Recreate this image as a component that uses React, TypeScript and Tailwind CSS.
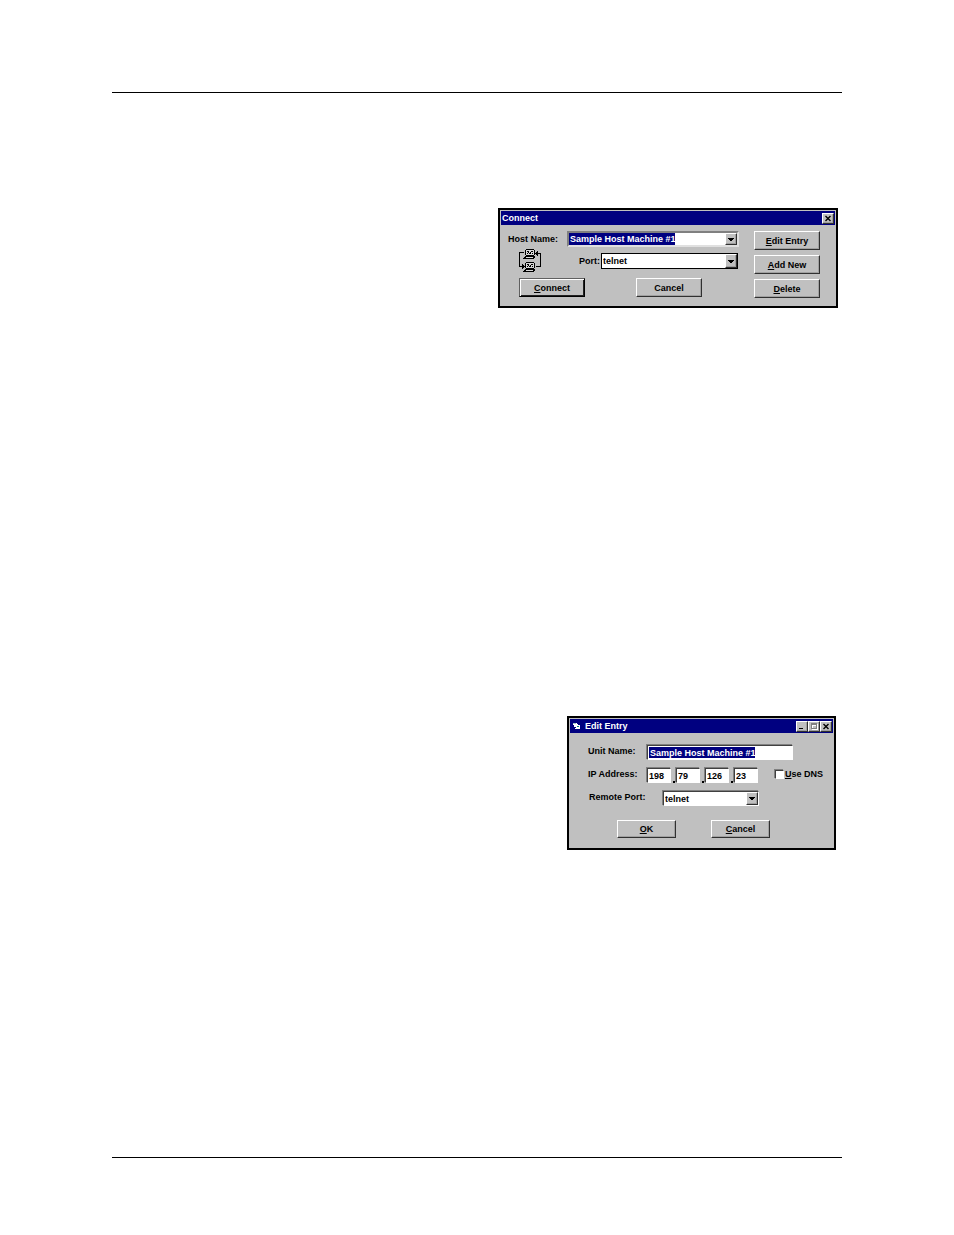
import React, { useState } from 'react';
import clsx from 'clsx';

const hosts = ['Sample Host Machine #1'];
const ports = ['telnet'];

const raised =
  'border border-t-white border-l-white border-r-[#303030] border-b-[#303030] shadow-[inset_-1px_-1px_0_#a0a0a0]';

// navy block behind the selected text
const selectedText =
  'bg-[linear-gradient(#000080,#000080)] bg-no-repeat bg-[length:106px_100%] text-white';

interface PushButtonProps {
  children: React.ReactNode;
  className?: string;
  isDefault?: boolean;
}

const PushButton: React.FC<PushButtonProps> = ({
  children,
  className,
  isDefault,
}) => (
  <button
    type="button"
    className={clsx(
      'flex items-center justify-center bg-[#c0c0c0]',
      isDefault
        ? 'border border-t-[#606060] border-l-[#606060] border-r-black border-b-black shadow-[inset_1px_1px_0_#fff,inset_-1px_-1px_0_#202020]'
        : raised,
      className
    )}
  >
    <span>{children}</span>
  </button>
);

interface DropDownProps {
  id: string;
  options: string[];
  className?: string;
  selected?: boolean;
}

const DropDown: React.FC<DropDownProps> = ({
  id,
  options,
  className,
  selected,
}) => (
  <div className={clsx('relative flex bg-white', className)}>
    <select
      id={id}
      className={clsx(
        'w-full appearance-none pl-px leading-3 outline-none',
        selected && selectedText
      )}
    >
      {options.map((option) => (
        <option key={option} className="bg-white text-black">
          {option}
        </option>
      ))}
    </select>
    <span
      className={clsx(
        'pointer-events-none absolute inset-y-0 right-0 flex w-3 items-center justify-center bg-[#c0c0c0]',
        raised
      )}
    >
      <svg width="6" height="3" viewBox="0 0 6 3" shapeRendering="crispEdges">
        <path d="M0 0h6v1h-1v1h-1v1h-2v-1h-1v-1h-1z" />
      </svg>
    </span>
  </div>
);

interface TitleButtonProps {
  label: string;
  children: React.ReactNode;
}

const TitleButton: React.FC<TitleButtonProps> = ({ label, children }) => (
  <button
    type="button"
    aria-label={label}
    className={clsx(
      'flex h-[11px] w-3 items-center justify-center bg-[#c0c0c0]',
      raised
    )}
  >
    <svg width="8" height="7" viewBox="0 0 8 7" shapeRendering="crispEdges">
      {children}
    </svg>
  </button>
);

const CloseGlyph = () => (
  <path
    d="M1.5 1l5 5M6.5 1l-5 5"
    stroke="#000"
    strokeWidth="1.4"
    shapeRendering="auto"
  />
);

const NetworkIcon = () => (
  <svg
    width="23"
    height="24"
    viewBox="0 0 23 24"
    shapeRendering="crispEdges"
    className="shrink-0"
  >
    {[0, 13].map((y) => (
      <g key={y} transform={`translate(0 ${y})`}>
        <path d="M7 0h8v1h1v5h-1v1h-8v-1h-1v-5h1z" />
        <path d="M7 1h8v5h-8z" fill="#d8d8d8" />
        <path d="M8 2h2v1h-2zM12 2h2v1h-2zM9 3h1v1h-1zM11 3h1v1h-1zM8 4h1v1h-1zM10 4h2v1h-2zM13 4h1v1h-1z" />
        <path d="M6 7h10v2h-1v1h-11v-1h1v-1h1z" />
        <path d="M7 8h7v1h-7z" fill="#d8d8d8" />
      </g>
    ))}
    <path d="M0 3h5v1h-4v13h2v-2h1v1h1v1h1v1h-1v1h-1v1h-1v-2h-3z" />
    <path d="M22 18h-5v-1h4v-12h-2v2h-1v-1h-1v-1h-1v-1h1v-1h1v-1h1v2h3z" />
  </svg>
);

interface DialogProps {
  title: string;
  icon?: React.ReactNode;
  controls: React.ReactNode;
  className?: string;
  children: React.ReactNode;
}

const Dialog: React.FC<DialogProps> = ({
  title,
  icon,
  controls,
  className,
  children,
}) => (
  <section
    className={clsx(
      'max-w-full border-2 border-black bg-[#c0c0c0] p-px',
      className
    )}
  >
    <header className="flex h-3.5 items-center bg-[#000080] px-px text-white">
      {icon}
      <h2 className="grow">{title}</h2>
      <div className="flex">{controls}</div>
    </header>
    {children}
  </section>
);

const ConnectDialog = () => (
  <Dialog
    title="Connect"
    className="mr-1 w-[340px]"
    controls={
      <TitleButton label="Close">
        <CloseGlyph />
      </TitleButton>
    }
  >
    <form className="flex justify-between pt-1.5 pr-[15px] pb-[7px] pl-[7px]">
      <div>
        <div className="flex h-4 items-center">
          <label htmlFor="host" className="w-[59px]">
            Host Name:
          </label>
          <DropDown
            id="host"
            options={hosts}
            selected
            className="h-4 w-[172px] border-2 border-t-[#808080] border-r-[#e0e0e0] border-b-[#e0e0e0] border-l-[#808080]"
          />
        </div>
        <div className="mt-0.5 flex h-6 items-center pl-[11px]">
          <NetworkIcon />
          <label htmlFor="port" className="ml-[37px] w-[22px]">
            Port:
          </label>
          <DropDown
            id="port"
            options={ports}
            className="h-4 w-[137px] border border-black"
          />
        </div>
        <div className="mt-[5px] flex justify-between pr-[37px] pl-[11px]">
          <PushButton isDefault className="h-[19px] w-[66px]">
            <u>C</u>onnect
          </PushButton>
          <PushButton className="h-[19px] w-[66px]">Cancel</PushButton>
        </div>
      </div>
      <div className="flex flex-col gap-[5px]">
        <PushButton className="h-[19px] w-[66px]">
          <u>E</u>dit Entry
        </PushButton>
        <PushButton className="h-[19px] w-[66px]">
          <u>A</u>dd New
        </PushButton>
        <PushButton className="h-[19px] w-[66px]">
          <u>D</u>elete
        </PushButton>
      </div>
    </form>
  </Dialog>
);

const sunken =
  'border border-t-[#404040] border-l-[#404040] border-r-white border-b-white bg-white shadow-[-1px_-1px_0_#808080]';

const EditEntryDialog = () => {
  const [address, setAddress] = useState(['198', '79', '126', '23']);
  const [useDns, setUseDns] = useState(false);

  const updateOctet = (index: number, value: string) => {
    setAddress(address.map((octet, i) => (i === index ? value : octet)));
  };

  return (
    <Dialog
      title="Edit Entry"
      className="mr-1.5 w-[269px]"
      icon={
        <svg
          width="8"
          height="8"
          viewBox="0 0 8 8"
          shapeRendering="crispEdges"
          className="mr-1 ml-0.5"
        >
          <path d="M0 1h4v1h1v1h2v4h-5v-2h-1v-2h-1z" fill="#fff" />
          <path d="M0 1h3v1h-3z" fill="#a0c8c8" />
          <path d="M4 4h2v1h-2z" fill="#008080" />
          <path d="M2 5h1v1h-1z" fill="#000080" />
        </svg>
      }
      controls={
        <>
          <TitleButton label="Minimize">
            <path d="M1 5h4v1h-4z" />
          </TitleButton>
          <TitleButton label="Maximize">
            <path d="M2 1h6v6h-6zM3 3v3h4v-3z" fill="#fff" fillRule="evenodd" />
            <path d="M1 0h6v6h-6zM2 2v3h4v-3z" fill="#808080" fillRule="evenodd" />
          </TitleButton>
          <TitleButton label="Close">
            <CloseGlyph />
          </TitleButton>
        </>
      }
    >
      <form className="flex flex-col gap-2 pt-3 pr-2 pb-[9px] pl-[18px]">
        <div className="flex">
          <label htmlFor="unit" className="w-[59px]">
            Unit Name:
          </label>
          <div className={clsx('flex h-[15px] w-[146px] p-px', sunken)}>
            <input
              id="unit"
              type="text"
              defaultValue={hosts[0]}
              className={clsx('w-full pl-px outline-none', selectedText)}
            />
          </div>
        </div>
        <div className="flex">
          <label htmlFor="octet-0" className="w-[59px]">
            IP Address:
          </label>
          {address.map((octet, index) => (
            <React.Fragment key={index}>
              {index > 0 && (
                <span className="flex w-[5px] items-end justify-center">
                  <span className="size-0.5 bg-black" />
                </span>
              )}
              <input
                id={`octet-${index}`}
                aria-label={`IP address part ${index + 1}`}
                type="text"
                value={octet}
                onChange={(e) => updateOctet(index, e.target.value)}
                className={clsx('h-[15px] w-6 pl-px outline-none', sunken)}
              />
            </React.Fragment>
          ))}
          <label className="ml-[17px] flex">
            <input
              type="checkbox"
              checked={useDns}
              onChange={(e) => setUseDns(e.target.checked)}
              className={clsx(
                'mt-0.5 mr-px size-[9px] appearance-none checked:bg-black',
                sunken
              )}
            />
            <span>
              <u>U</u>se DNS
            </span>
          </label>
        </div>
        <div className="flex">
          <label htmlFor="remote-port" className="w-[75px] pl-px">
            Remote Port:
          </label>
          <DropDown
            id="remote-port"
            options={ports}
            className={clsx('h-[15px] w-24', sunken)}
          />
        </div>
        <div className="mt-1.5 flex gap-[35px] pl-[29px]">
          <PushButton className="h-[18px] w-[59px]">
            <u>O</u>K
          </PushButton>
          <PushButton className="h-[18px] w-[59px]">
            <u>C</u>ancel
          </PushButton>
        </div>
      </form>
    </Dialog>
  );
};

const App: React.FC = () => {
  return (
    <div className="min-h-screen bg-white px-28 pt-[92px] pb-[77px] font-['Liberation_Sans',Arial,sans-serif] text-[9px] leading-3 font-bold text-black">
      <hr className="border-black" />
      <main className="flex flex-col items-end gap-[408px] pt-[115px] pb-[307px]">
        <ConnectDialog />
        <EditEntryDialog />
      </main>
      <hr className="border-black" />
    </div>
  );
};

export default App;
